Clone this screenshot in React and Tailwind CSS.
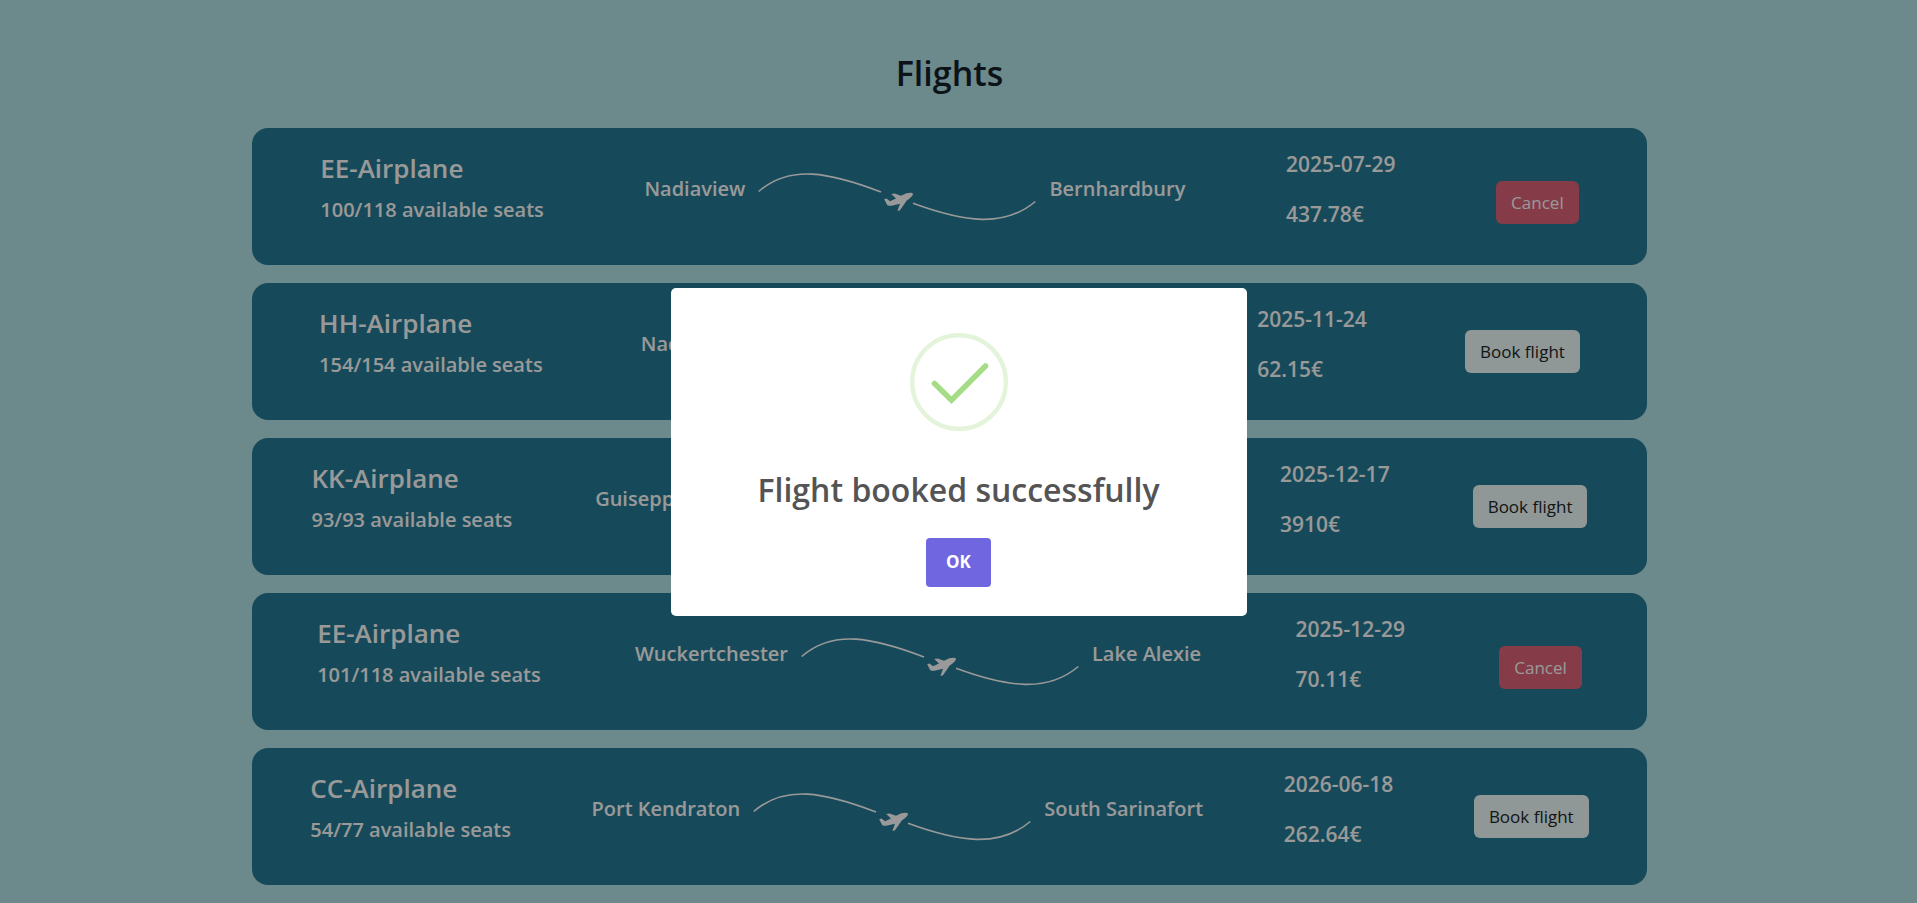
const flights = [
  { plane: 'EE-Airplane', seats: '100/118', from: 'Nadiaview', to: 'Bernhardbury', date: '2025-07-29', price: '437.78€', booked: true },
  { plane: 'HH-Airplane', seats: '154/154', from: 'Nadiaview', to: 'Port Kianna', date: '2025-11-24', price: '62.15€', booked: false },
  { plane: 'KK-Airplane', seats: '93/93', from: 'Guiseppeburgh', to: 'Lake Gretchens', date: '2025-12-17', price: '3910€', booked: false },
  { plane: 'EE-Airplane', seats: '101/118', from: 'Wuckertchester', to: 'Lake Alexie', date: '2025-12-29', price: '70.11€', booked: true },
  { plane: 'CC-Airplane', seats: '54/77', from: 'Port Kendraton', to: 'South Sarinafort', date: '2026-06-18', price: '262.64€', booked: false },
];

function FlightPath() {
  return (
    <svg className="mx-[13px] h-[50px] w-[278px] shrink-0" viewBox="0 0 278 50" fill="none" aria-hidden="true">
      <path d="M0.7 19.5C32 -8 72 0.5 123 20" stroke="#fff" strokeWidth="1.6" />
      <path d="M155 31.3C206 50 246 56 277.3 29.5" stroke="#fff" strokeWidth="1.6" />
      <path
        d="M154.8 21.4C154 20.2 151 20.6 148.4 21.3L143 23.8L136.6 21.6L133.2 22L138 26.6L132 29.2L128.5 26.6L126.2 27.2L129 32.8C129.8 34 132.5 34 134.5 33.4L142 31.7L139.4 38.8L141.8 38.6L148.8 28.5C151.5 26.5 155.8 23.4 154.8 21.4Z"
        fill="#fff"
      />
    </svg>
  );
}

function FlightCard({ flight }) {
  return (
    <li className="flex h-[137px] items-start justify-around rounded-2xl bg-[#267b94] px-[18px] pt-[23px] font-semibold text-white">
      <div>
        <h2 className="mb-3 text-[26px] leading-[34px]">{flight.plane}</h2>
        <p className="text-xl leading-[26px]">{flight.seats} available seats</p>
      </div>
      <div className="flex items-center pt-[21px] text-xl leading-[26px]">
        <span className="pb-4">{flight.from}</span>
        <FlightPath />
        <span className="pb-4">{flight.to}</span>
      </div>
      <div className="text-[21px] leading-[26px]">
        <p className="mb-6">{flight.date}</p>
        <p>{flight.price}</p>
      </div>
      {flight.booked ? (
        <button type="button" className="mt-[30px] h-[43px] rounded-md bg-[#de6478] px-[15px] text-[17px] font-normal text-white">
          Cancel
        </button>
      ) : (
        <button type="button" className="mt-6 h-[43px] rounded-md bg-[#eefdfa] px-[15px] text-[17px] font-normal text-[#212529]">
          Book flight
        </button>
      )}
    </li>
  );
}

function SuccessDialog() {
  return (
    <div className="fixed inset-0 flex items-center justify-center bg-black/40">
      <div role="dialog" aria-modal="true" aria-labelledby="dialog-title" className="flex w-[576px] flex-col items-center rounded-[5px] bg-white pt-[45px] pb-[29px]">
        <svg className="size-[98px]" viewBox="0 0 98 98" fill="none" aria-hidden="true">
          <circle cx="49" cy="49" r="46.8" stroke="#a5dc86" strokeOpacity="0.3" strokeWidth="4.4" />
          <path d="M24.5 50.5L41.5 67.2L75.5 33" stroke="#a5dc86" strokeWidth="5.5" strokeLinecap="round" strokeLinejoin="miter" />
        </svg>
        <h2 id="dialog-title" className="mt-[38px] text-[32px] leading-[42px] font-semibold text-[#545454]">
          Flight booked successfully
        </h2>
        <button type="button" className="mt-[27px] h-[49px] rounded bg-[#7066e0] px-5 text-[17px] font-bold text-white">
          OK
        </button>
      </div>
    </div>
  );
}

export default function App() {
  return (
    <div className="min-h-screen bg-[#b4e4e9] pr-[18px] font-['Open_Sans','Noto_Sans',sans-serif]">
      <main className="mx-auto max-w-[1395px] pt-[52px] pb-[18px]">
        <h1 className="mb-[34px] text-center text-[34px] leading-[42px] font-semibold text-[#132129]">Flights</h1>
        <ul className="flex flex-col gap-[18px]">
          {flights.map((flight) => (
            <FlightCard key={flight.date} flight={flight} />
          ))}
        </ul>
      </main>
      <SuccessDialog />
    </div>
  );
}
